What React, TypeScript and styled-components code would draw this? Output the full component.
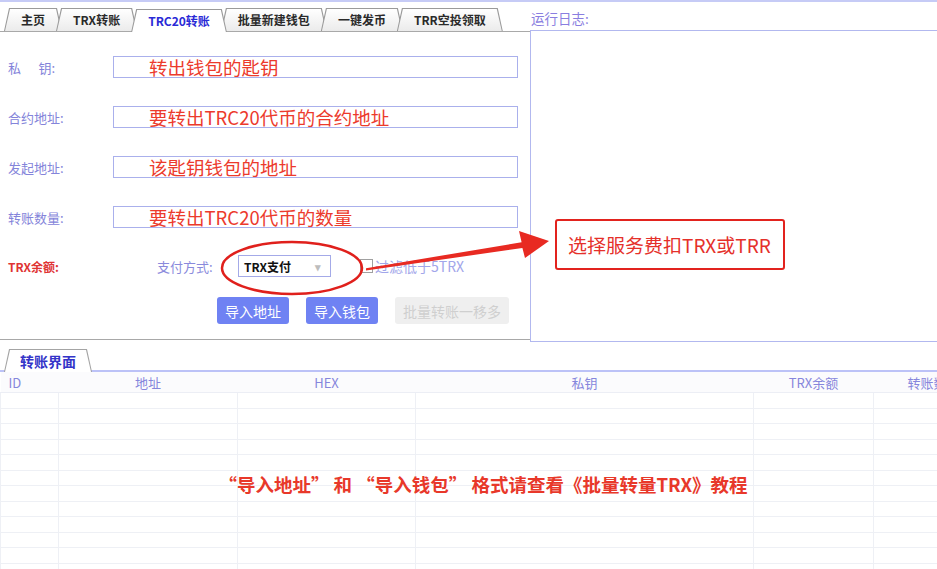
import styled, { createGlobalStyle } from "styled-components";

const GlobalStyle = createGlobalStyle`
  html, body {
    margin: 0;
    padding: 0;
    background: #ffffff;
  }
  body {
    font-family: "Noto Sans CJK SC", "Noto Sans", sans-serif;
  }
`;

const TABS = ["主页", "TRX转账", "TRC20转账", "批量新建钱包", "一键发币", "TRR空投领取"];
const ACTIVE_TAB = 2;

const FIELDS = [
  { label: "私\u00a0\u00a0\u00a0\u00a0\u00a0\u00a0钥:", hint: "转出钱包的匙钥" },
  { label: "合约地址:", hint: "要转出TRC20代币的合约地址" },
  { label: "发起地址:", hint: "该匙钥钱包的地址" },
  { label: "转账数量:", hint: "要转出TRC20代币的数量" },
];

const COLUMNS = [
  { title: "ID", width: 58, align: "left" },
  { title: "地址", width: 179, align: "center" },
  { title: "HEX", width: 178, align: "center" },
  { title: "私钥", width: 338, align: "center" },
  { title: "TRX余额", width: 120, align: "center" },
  { title: "转账数量", width: 120, align: "center" },
];

const ROW_COUNT = 12;

const TRAPEZOID = "polygon(5px 0, calc(100% - 5px) 0, 100% 100%, 0 100%)";

export default function App() {
  return (
    <Page>
      <GlobalStyle />
      <TopArea>
        <LeftPane>
          <TabBar>
            {TABS.map((t, i) => (
              <Tab key={t} $active={i === ACTIVE_TAB}>
                {t}
              </Tab>
            ))}
          </TabBar>
          <FormPanel>
            <Fields>
              {FIELDS.map((f) => (
                <FieldRow key={f.label}>
                  <FieldLabel>{f.label}</FieldLabel>
                  <InputBox>
                    <Hint>{f.hint}</Hint>
                  </InputBox>
                </FieldRow>
              ))}
            </Fields>
            <PayRow>
              <BalanceLabel>TRX余额:</BalanceLabel>
              <PayLabel>支付方式:</PayLabel>
              <Select>
                <span>TRX支付</span>
                <Caret>▾</Caret>
              </Select>
              <Checkbox />
              <FilterText>过滤低于5TRX</FilterText>
            </PayRow>
            <ButtonRow>
              <Button>导入地址</Button>
              <Button>导入钱包</Button>
              <Button $disabled>批量转账一移多</Button>
            </ButtonRow>
          </FormPanel>
        </LeftPane>
        <RightPane>
          <LogLabel>运行日志:</LogLabel>
          <LogBox />
        </RightPane>
      </TopArea>

      <BottomArea>
        <SubTabBar>
          <SubTab>转账界面</SubTab>
        </SubTabBar>
        <Table>
          <colgroup>
            {COLUMNS.map((c) => (
              <Col key={c.title} $width={c.width} />
            ))}
          </colgroup>
          <thead>
            <tr>
              {COLUMNS.map((c) => (
                <Th key={c.title} $align={c.align}>
                  {c.title}
                </Th>
              ))}
            </tr>
          </thead>
          <tbody>
            {Array.from({ length: ROW_COUNT }).map((_, r) => (
              <tr key={r}>
                {COLUMNS.map((c) => (
                  <Td key={c.title} />
                ))}
              </tr>
            ))}
          </tbody>
        </Table>
        <TableNote>“导入地址” 和 “导入钱包” 格式请查看《批量转量TRX》教程</TableNote>
      </BottomArea>

      {/* red markup drawn over the screenshot */}
      <Markup viewBox="0 0 937 569" width="937" height="569">
        <ellipse cx="292" cy="268" rx="70" ry="26" fill="none" stroke="#e0201c" strokeWidth="2.5" />
        <polygon
          points="366,268.3 521.6,242.2 519,231 549,241 525,258 522.4,248 366,270.4"
          fill="#e82a22"
        />
      </Markup>
      <Callout>选择服务费扣TRX或TRR</Callout>
    </Page>
  );
}

const Page = styled.div`
  position: relative;
  width: 937px;
  height: 569px;
  overflow: hidden;
  border-top: 2px solid #c6cbf6;
  box-sizing: border-box;
  background: #fff;
`;

const TopArea = styled.div`
  display: flex;
  height: 338px;
`;

const LeftPane = styled.div`
  width: 530px;
  display: flex;
  flex-direction: column;
`;

const TabBar = styled.div`
  height: 30px;
  box-sizing: border-box;
  padding: 6px 0 0 4px;
  display: flex;
  align-items: flex-end;
  border-bottom: 1px solid #a9a9a9;
`;

const Tab = styled.div<{ $active?: boolean }>`
  position: relative;
  z-index: ${(p) => (p.$active ? 2 : 1)};
  height: 23px;
  padding: 0 17px;
  margin-right: -6px;
  margin-bottom: ${(p) => (p.$active ? "-1px" : "0")};
  display: flex;
  align-items: center;
  font-size: 12px;
  font-weight: 600;
  white-space: nowrap;
  color: ${(p) => (p.$active ? "#2a2ad6" : "#2a2a2a")};

  &::before,
  &::after {
    content: "";
    position: absolute;
    z-index: -1;
    clip-path: ${TRAPEZOID};
  }

  &::before {
    inset: 0;
    background: #9a9a9a;
  }

  &::after {
    inset: 1px 1px 0 1px;
    background: ${(p) =>
      p.$active ? "#ffffff" : "linear-gradient(#ffffff, #ebebeb)"};
  }
`;

const FormPanel = styled.div`
  flex: 1;
  border-bottom: 1px solid #a8a8a8;
  padding: 24px 0 0 8px;
  display: flex;
  flex-direction: column;
`;

const Fields = styled.div`
  display: flex;
  flex-direction: column;
  gap: 28px;
`;

const FieldRow = styled.div`
  display: grid;
  grid-template-columns: 105px 405px;
  align-items: center;
  height: 22px;
`;

const FieldLabel = styled.span`
  font-size: 13px;
  color: #8484da;
  white-space: nowrap;
`;

const InputBox = styled.div`
  height: 22px;
  box-sizing: border-box;
  border: 1px solid #aab0ec;
  padding-left: 35px;
  display: flex;
  align-items: center;
`;

const Hint = styled.span`
  font-size: 18.5px;
  line-height: 20px;
  color: #ec3a2c;
  white-space: nowrap;
`;

const PayRow = styled.div`
  margin-top: 27px;
  height: 22px;
  display: flex;
  align-items: center;
`;

const BalanceLabel = styled.span`
  width: 149px;
  font-size: 12px;
  font-weight: 700;
  color: #e03434;
`;

const PayLabel = styled.span`
  width: 81px;
  font-size: 13px;
  color: #8a8adc;
`;

const Select = styled.div`
  width: 93px;
  height: 22px;
  box-sizing: border-box;
  border: 1px solid #a4aae8;
  padding: 0 9px 0 5px;
  display: flex;
  align-items: center;
  justify-content: space-between;
  font-size: 12px;
  font-weight: 700;
  color: #111;
`;

const Caret = styled.span`
  color: #bdbdbd;
  font-size: 11px;
`;

const Checkbox = styled.span`
  margin-left: 29px;
  width: 13px;
  height: 14px;
  box-sizing: border-box;
  border: 1px solid #a0a0a0;
  background: #fff;
`;

const FilterText = styled.span`
  margin-left: 2px;
  font-size: 14px;
  color: #a2a6ea;
  white-space: nowrap;
`;

const ButtonRow = styled.div`
  margin-top: 20px;
  padding-left: 209px;
  display: flex;
  gap: 17px;
`;

const Button = styled.div<{ $disabled?: boolean }>`
  height: 27px;
  padding: 0 8px;
  display: flex;
  align-items: center;
  border-radius: 3px;
  font-size: 14px;
  white-space: nowrap;
  background: ${(p) => (p.$disabled ? "#efefef" : "#6f82f3")};
  color: ${(p) => (p.$disabled ? "#cfcfcf" : "#ffffff")};
`;

const RightPane = styled.div`
  flex: 1;
  display: flex;
  flex-direction: column;
`;

const LogLabel = styled.div`
  height: 28px;
  box-sizing: border-box;
  padding: 6px 0 0 1px;
  font-size: 13.5px;
  color: #8a7ee0;
`;

const LogBox = styled.div`
  flex: 1;
  margin-bottom: -2px;
  border: 1px solid #b2b8ef;
  border-right: none;
`;

const BottomArea = styled.div`
  position: relative;
  margin-top: 2px;
`;

const SubTabBar = styled.div`
  height: 30px;
  box-sizing: border-box;
  padding: 7px 0 0 4px;
  display: flex;
  align-items: flex-end;
  border-bottom: 2px solid #bcc2f7;
`;

const SubTab = styled.div`
  position: relative;
  z-index: 1;
  height: 23px;
  width: 88px;
  margin-bottom: -2px;
  display: flex;
  align-items: center;
  justify-content: center;
  font-size: 14px;
  font-weight: 700;
  color: #3434c8;

  &::before,
  &::after {
    content: "";
    position: absolute;
    z-index: -1;
    clip-path: ${TRAPEZOID};
  }

  &::before {
    inset: 0;
    background: #a4a4a4;
  }

  &::after {
    inset: 1px 1px 0 1px;
    background: #ffffff;
  }
`;

const Table = styled.table`
  border-collapse: collapse;
  table-layout: fixed;
  width: 993px;
`;

const Col = styled.col<{ $width: number }>`
  width: ${(p) => p.$width}px;
`;

const Th = styled.th<{ $align: string }>`
  height: 20px;
  padding: 0 8px;
  font-size: 13px;
  font-weight: 400;
  color: #8686dc;
  text-align: ${(p) => p.$align};
  border-bottom: 1px solid #eceef5;
  background: #fbfbfd;
  white-space: nowrap;
`;

const Td = styled.td`
  height: 14.5px;
  padding: 0;
  border: 1px solid #eef0f5;
  border-top: none;
`;

const TableNote = styled.div`
  position: absolute;
  left: 0;
  width: 966px;
  top: 129px;
  text-align: center;
  font-size: 18.5px;
  font-weight: 600;
  color: #e8382a;
  white-space: nowrap;
`;

const Markup = styled.svg`
  position: absolute;
  left: 0;
  top: -2px;
  pointer-events: none;
`;

const Callout = styled.div`
  position: absolute;
  left: 555px;
  top: 217px;
  width: 230px;
  height: 51px;
  box-sizing: border-box;
  border: 2px solid #e2231e;
  border-radius: 3px;
  padding-left: 11px;
  display: flex;
  align-items: center;
  font-size: 19px;
  color: #e5302a;
  background: #fff;
`;
